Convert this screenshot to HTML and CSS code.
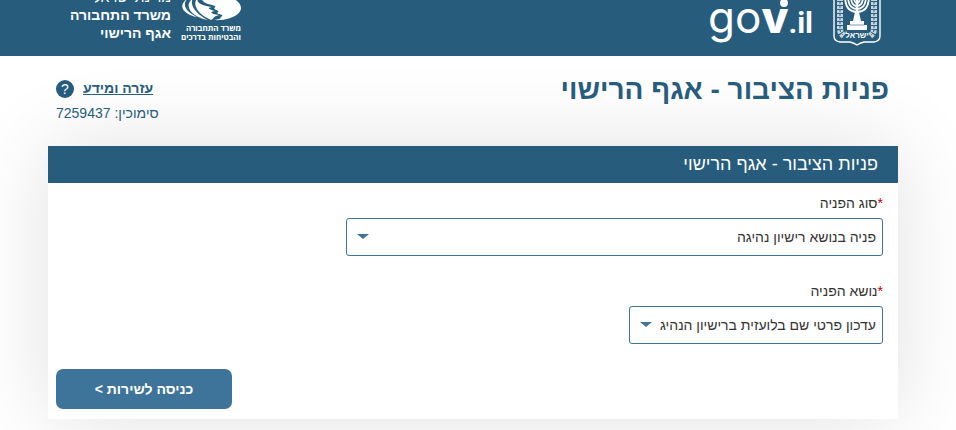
FILE: index.html
```html
<!DOCTYPE html>
<html lang="he" dir="rtl">
<head>
  <meta charset="UTF-8" />
  <title>פניות הציבור - אגף הרישוי</title>
  <meta name="viewport" content="width=device-width, initial-scale=1.0" />
  <link rel="stylesheet" href="styles.css">
</head>
<body>
  <header class="top-bar">
    <div class="gov">
      <svg class="emblem" width="48" height="56" viewBox="0 0 48 56" fill="none" stroke="#fff" aria-label="סמל המדינה">
        <path d="M1 -4V36Q1 41 7 42H17Q21 43 24 45Q27 43 31 42H41Q47 41 47 36V-4" stroke-width="1.4"/>
        <path d="M7 -2V29Q7 33 11 36M41 -2V29Q41 33 37 36" stroke-width="6" stroke-dasharray="3 1" opacity=".75"/>
        <path d="M7 -2V29Q7 33 11 36M41 -2V29Q41 33 37 36" stroke="#275c7d" stroke-width="1" stroke-dasharray="2 2"/>
        <path d="M12 -4Q12 12 24 12Q36 12 36 -4M15 -4Q15 9 24 9Q33 9 33 -4M18 -4Q18 6 24 6Q30 6 30 -4M21 -4Q21 3 24 3Q27 3 27 -4" stroke-width="1.8"/>
        <path d="M24 -4V22" stroke-width="2.4"/>
        <path d="M22 12H26L28 21H31V25H34V30H14V25H17V21H20Z" fill="#fff" stroke="none"/>
        <path d="M17 25H31" stroke="#275c7d" stroke-width=".6"/>
        <text x="24" y="38" class="emblem-text" text-anchor="middle">ישראל</text>
      </svg>
      <svg class="gov-logo" width="100" height="56" viewBox="0 0 100 56" direction="ltr" fill="#fff">
        <text x="-1" y="33"><tspan class="gov-thin">go</tspan><tspan class="gov-bold">v</tspan><tspan class="gov-small">.il</tspan></text>
        <circle cx="75" cy="3" r="4"/>
      </svg>
    </div>
    <div class="ministry">
      <svg class="ministry-logo" width="62" height="56" viewBox="0 0 62 56" fill="#fff">
        <path d="M19 -6C38 -9 60 -2 60 8C60 16 45 21 33 20C42 19 38 18 41 16C43 14 34 15 37 12C39 10 31 10 34 7C36 5 25 5 22 1C20 -1 18 -4 19 -6Z"/>
        <path d="M17 -3C15 2 18 5 31 7C24 8 30 10 34 11C27 12 31 14 38 15C31 17 34 18 30 20C20 16 9 6 17 -3Z"/>
        <path d="M12 -2C8 5 15 14 27 20C15 18 0 8 12 -2Z"/>
        <path d="M6 -1C1 5 5 12 16 17C5 15 -5 7 6 -1Z"/>
        <text x="60" y="31" class="logo-text" direction="rtl">משרד התחבורה</text>
        <text x="60" y="40" class="logo-text" direction="rtl">והבטיחות בדרכים</text>
      </svg>
      <div class="ministry-name">
        <div class="state">מדינת ישראל</div>
        <div>משרד התחבורה</div>
        <div>אגף הרישוי</div>
      </div>
    </div>
  </header>

  <main class="page">
    <div class="page-head">
      <h1>פניות הציבור - אגף הרישוי</h1>
      <div class="help">
        <div class="help-row">
          <a href="#">עזרה ומידע</a>
          <span class="help-icon">?</span>
        </div>
        <div class="reference">סימוכין: 7259437</div>
      </div>
    </div>

    <form class="panel">
      <h2>פניות הציבור - אגף הרישוי</h2>
      <div class="fields">
        <div class="field">
          <label for="requestType"><span class="required">*</span>סוג הפניה</label>
          <div class="select wide">
            <select id="requestType">
              <option>פניה בנושא רישיון נהיגה</option>
            </select>
          </div>
        </div>
        <div class="field">
          <label for="requestSubject"><span class="required">*</span>נושא הפניה</label>
          <div class="select">
            <select id="requestSubject">
              <option>עדכון פרטי שם בלועזית ברישיון הנהיג</option>
            </select>
          </div>
        </div>
      </div>
      <div class="actions">
        <button type="button">כניסה לשירות &gt;</button>
      </div>
    </form>
  </main>
</body>
</html>
```
FILE: styles.css
```css
:root {
  --primary: #275c7d;
  --secondary: #3e7499;
  --text: #333333;
  --font: "Liberation Sans", Arial, sans-serif;
}

* {
  box-sizing: border-box;
}

body {
  margin: 0;
  min-height: 100vh;
  background: #ffffff;
  color: var(--text);
  font-family: var(--font);
  font-size: 14px;
  overflow: hidden;
}

.top-bar {
  position: relative;
  z-index: 1;
  display: flex;
  justify-content: space-between;
  background: var(--primary);
  color: white;
  height: 56px;
  padding: 0 75px 0 70px;
  overflow: hidden;
}

.gov {
  display: flex;
  gap: 24px;
}

.gov-logo {
  overflow: visible;
}

.gov-thin,
.gov-bold {
  font-family: Inter, sans-serif;
  font-size: 44px;
}

.gov-bold {
  font-weight: 800;
}

.gov-small {
  font-family: Roboto, sans-serif;
  font-size: 30px;
  font-weight: bold;
}

.emblem-text {
  font-family: var(--font);
  font-size: 8px;
  font-weight: bold;
  fill: #ffffff;
  stroke: none;
}

.ministry {
  display: flex;
  align-items: flex-end;
  gap: 10px;
}

.logo-text {
  font-family: "Open Sans", sans-serif;
  font-size: 8px;
  font-weight: bold;
}

.ministry-name {
  font-size: 14px;
  font-weight: bold;
  line-height: 18px;
  padding-bottom: 14px;
}

.state {
  font-weight: normal;
}

.page {
  padding: 0 58px 11px 48px;
}

.page-head {
  position: relative;
  z-index: 1;
  display: flex;
  justify-content: space-between;
  height: 90px;
  padding: 12px 9px 0 8px;
  color: var(--primary);
}

h1 {
  margin: 0;
  font-size: 28px;
  font-weight: bold;
  line-height: 44px;
}

.help {
  padding-top: 8px;
  line-height: 25px;
}

.help-row {
  display: flex;
  align-items: center;
  justify-content: flex-end;
  gap: 9px;
}

.help a {
  color: var(--primary);
  font-weight: bold;
}

.help-icon {
  width: 18px;
  height: 18px;
  border-radius: 50%;
  background: var(--primary);
  color: white;
  line-height: 18px;
  text-align: center;
}

.panel {
  background: white;
  box-shadow: 0 0 80px rgba(0, 0, 0, 0.12);
}

h2 {
  margin: 0;
  padding: 0 20px;
  background: var(--primary);
  color: white;
  font-size: 18px;
  font-weight: normal;
  line-height: 37px;
}

.fields {
  display: flex;
  flex-direction: column;
  gap: 25px;
  padding: 10px 15px 0;
}

.field label {
  display: block;
  line-height: 20px;
  margin-bottom: 5px;
}

.required {
  color: #c00000;
}

.select {
  position: relative;
  width: 254px;
}

.select.wide {
  width: 537px;
}

.select::after {
  content: "";
  position: absolute;
  left: 11px;
  top: 16px;
  border: 6px solid transparent;
  border-top: 5px solid var(--secondary);
  border-bottom: 0;
}

select {
  display: block;
  width: 100%;
  height: 38px;
  padding: 0 6px 0 28px;
  appearance: none;
  background: white;
  border: 1px solid var(--secondary);
  border-radius: 3px;
  color: var(--text);
  font-family: inherit;
  font-size: 14px;
}

.actions {
  display: flex;
  justify-content: flex-end;
  padding: 25px 8px 10px;
}

button {
  width: 176px;
  height: 40px;
  background: var(--secondary);
  border: none;
  border-radius: 7px;
  color: white;
  font-family: inherit;
  font-size: 14px;
  font-weight: bold;
  cursor: pointer;
}
```
